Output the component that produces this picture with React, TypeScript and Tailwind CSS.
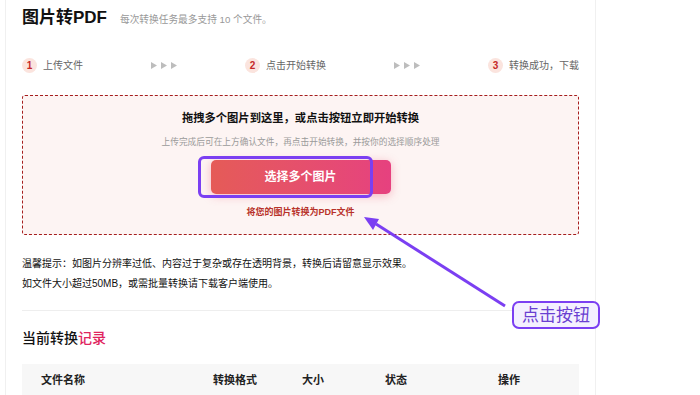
const font = "font-['Liberation_Sans','Noto_Sans_CJK_SC',sans-serif]";

function Step({ n, label }: { n: number; label: string }) {
  return (
    <div className="flex items-center gap-[6px]">
      <span className="flex h-[15px] w-[15px] items-center justify-center rounded-full bg-[#fbe4de] text-[10px] font-bold text-[#c62828]">
        {n}
      </span>
      <span className="text-[10px] text-[#666]">{label}</span>
    </div>
  );
}

function Arrows() {
  return (
    <div className="flex w-[26px] items-center justify-between">
      {[0, 1, 2].map((i) => (
        <svg key={i} width="6" height="7" viewBox="0 0 6 7">
          <path d="M0 0 L6 3.5 L0 7 Z" fill="#bdbdbd" />
        </svg>
      ))}
    </div>
  );
}

export default function App() {
  return (
    <div className={`relative h-[395px] w-[700px] overflow-hidden bg-white ${font}`}>
      <div className="ml-[5px] h-full w-[591px] border-x border-[#f0f0f0] px-[16px]">
        {/* title */}
        <div className="flex items-baseline gap-[13px] pt-[6px]">
          <h1 className="text-[17px] font-bold leading-[24px] text-[#111]">图片转PDF</h1>
          <span className="text-[9.7px] text-[#999]">每次转换任务最多支持 10 个文件。</span>
        </div>

        {/* steps */}
        <div className="mt-[25px] flex h-[20px] items-center justify-between">
          <Step n={1} label="上传文件" />
          <Arrows />
          <Step n={2} label="点击开始转换" />
          <Arrows />
          <Step n={3} label="转换成功，下载" />
        </div>

        {/* drop zone */}
        <div className="mt-[20px] flex h-[140px] flex-col items-center rounded-[3px] border border-dashed border-[#a51d1d] bg-[#fdf4f3] pt-[14px]">
          <p className="text-[11.3px] font-bold leading-[16px] text-[#111]">
            拖拽多个图片到这里，或点击按钮立即开始转换
          </p>
          <p className="mt-[9px] text-[8.7px] leading-[14px] text-[#9a9a9a]">
            上传完成后可在上方确认文件，再点击开始转换，并按你的选择顺序处理
          </p>
          <button className="mt-[11px] h-[34px] w-[180px] rounded-[5px] bg-gradient-to-r from-[#e55b57] to-[#e6417f] text-[12px] font-bold text-white shadow-[0_2px_10px_rgba(230,70,100,0.35)]">
            选择多个图片
          </button>
          <p className="mt-[12px] text-[9px] font-semibold leading-[12px] text-[#b8322a]">将您的图片转换为PDF文件</p>
        </div>

        {/* tips */}
        <div className="mt-[19px] text-[10px] leading-[20px] text-[#111]">
          <p>温馨提示：如图片分辨率过低、内容过于复杂或存在透明背景，转换后请留意显示效果。</p>
          <p>如文件大小超过50MB，或需批量转换请下载客户端使用。</p>
        </div>

        <div className="mt-[16px] border-t border-[#eeeeee]" />

        <h2 className="mt-[17px] text-[14px] font-medium leading-[20px] text-[#111]">
          当前转换<span className="text-[#e0245e]">记录</span>
        </h2>

        <div className="mt-[16px] grid h-[32px] grid-cols-[172px_89px_83px_113px_1fr] items-center bg-[#f7f7f7] pl-[19px] text-[11px] font-semibold text-[#222]">
          <span>文件名称</span>
          <span>转换格式</span>
          <span>大小</span>
          <span>状态</span>
          <span>操作</span>
        </div>
      </div>

      {/* annotation overlay */}
      <div className="absolute left-[198px] top-[156px] h-[42px] w-[175px] rounded-[6px] border-[3px] border-[#7b3ff2]" />
      <svg className="absolute left-0 top-0" width="700" height="395">
        <line x1="505" y1="306" x2="376" y2="224" stroke="#7b3ff2" strokeWidth="3" />
        <polygon points="364,217 379,219 373,230" fill="#7b3ff2" />
      </svg>
      <div className="absolute left-[512px] top-[301px] flex h-[28px] w-[88px] items-center justify-center rounded-[7px] border-2 border-[#7b3ff2] bg-[#f4f0ff] text-[17px] leading-none text-[#6a3fd1]">
        点击按钮
      </div>
    </div>
  );
}
